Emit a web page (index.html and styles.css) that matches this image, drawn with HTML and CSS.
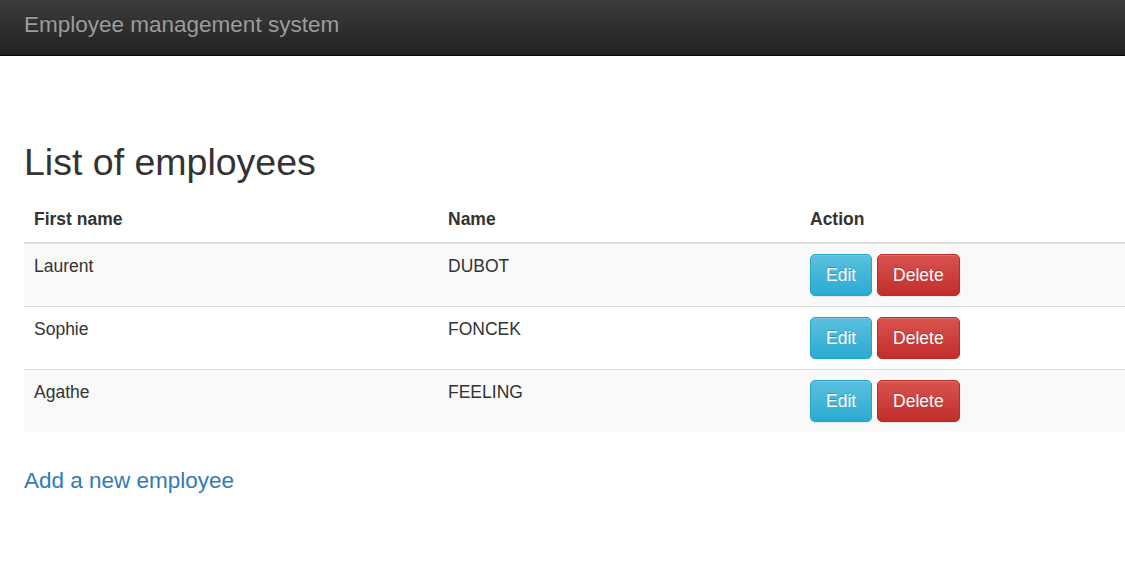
FILE: index.html
```html
<!DOCTYPE html>
<html lang="en">
<head>
<meta charset="utf-8">
<title>Employee management system</title>
<link rel="stylesheet" href="styles.css">
</head>
<body>
<nav class="navbar">
  <a class="brand" href="#">Employee management system</a>
</nav>
<main class="container">
  <h1 class="title">List of employees</h1>
  <table class="table">
    <colgroup>
      <col class="col-first">
      <col class="col-name">
      <col>
    </colgroup>
    <thead>
      <tr><th>First name</th><th>Name</th><th>Action</th></tr>
    </thead>
    <tbody>
      <tr class="striped">
        <td>Laurent</td><td>DUBOT</td>
        <td><a class="btn btn-info" href="#">Edit</a> <a class="btn btn-danger" href="#">Delete</a></td>
      </tr>
      <tr>
        <td>Sophie</td><td>FONCEK</td>
        <td><a class="btn btn-info" href="#">Edit</a> <a class="btn btn-danger" href="#">Delete</a></td>
      </tr>
      <tr class="striped">
        <td>Agathe</td><td>FEELING</td>
        <td><a class="btn btn-info" href="#">Edit</a> <a class="btn btn-danger" href="#">Delete</a></td>
      </tr>
    </tbody>
  </table>
  <a class="add-link" href="#">Add a new employee</a>
</main>
</body>
</html>
```
FILE: styles.css
```css
* { box-sizing: border-box; }
html, body { margin: 0; padding: 0; }
body {
  font-family: "Liberation Sans", Arial, Helvetica, sans-serif;
  font-size: 17.5px;
  line-height: 25px;
  color: #333;
  background: #fff;
}
.navbar {
  height: 56px;
  background: linear-gradient(to bottom, #3c3c3c 0, #222 100%);
  border-bottom: 1px solid #080808;
  padding: 12px 24px 0;
}
.brand {
  display: block;
  font-size: 22.5px;
  line-height: 25px;
  color: #9d9d9d;
  text-decoration: none;
  text-shadow: 0 -1px 0 rgba(0,0,0,.25);
}
.container {
  padding: 0 0 0 24px;
}
.title {
  font-size: 37.5px;
  font-weight: 500;
  line-height: 41px;
  margin: 86px 0 14px;
}
.table {
  width: 100%;
  border-collapse: collapse;
  border-spacing: 0;
  margin-bottom: 25px;
}
.col-first { width: 414px; }
.col-name { width: 362px; }
.table th, .table td {
  padding: 10px;
  text-align: left;
  vertical-align: top;
  line-height: 25px;
}
.table th {
  font-weight: bold;
  vertical-align: bottom;
  border-bottom: 2px solid #ddd;
}
.table tbody tr + tr td { border-top: 1px solid #ddd; }
.table tbody tr.striped { background: #f9f9f9; }
.btn {
  display: inline-block;
  height: 42px;
  padding: 7.5px 15px;
  font-size: 17.5px;
  line-height: 25px;
  border: 1px solid transparent;
  border-radius: 5px;
  color: #fff;
  text-decoration: none;
  text-shadow: 0 -1px 0 rgba(0,0,0,.2);
  box-shadow: inset 0 1px 0 rgba(255,255,255,.15), 0 1px 1px rgba(0,0,0,.075);
  vertical-align: middle;
}
.btn-info {
  background: linear-gradient(to bottom, #5bc0de 0, #2aabd2 100%);
  border-color: #28a4c9;
}
.btn-danger {
  background: linear-gradient(to bottom, #d9534f 0, #c12e2a 100%);
  border-color: #b92c28;
}
.add-link {
  display: inline-block;
  font-size: 22.5px;
  line-height: 25px;
  color: #337ab7;
  text-decoration: none;
  margin-top: 11px;
}
```
